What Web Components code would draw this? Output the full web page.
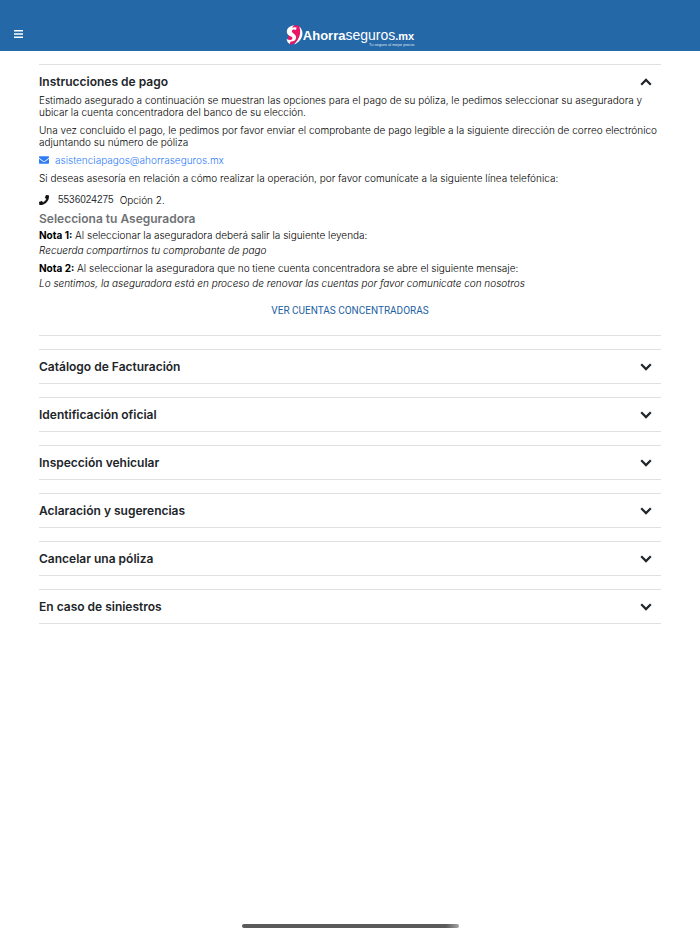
<!DOCTYPE html>
<html lang="es">
<head>
<meta charset="utf-8">
<meta name="viewport" content="width=device-width, initial-scale=1">
<title>Ahorraseguros.mx</title>
<style>
  body { margin: 0; font-family: Inter, "Liberation Sans", sans-serif; font-size: 10px; font-weight: 300; line-height: 12px; color: #000; background: #fff; }
</style>
</head>
<body>
<app-page></app-page>
<script>
const define = (name, html, setup) => customElements.define(name, class extends HTMLElement {
  constructor() {
    super();
    const t = document.createElement('template');
    t.innerHTML = html;
    this.attachShadow({ mode: 'open' }).append(t.content.cloneNode(true));
  }
  connectedCallback() { if (setup) setup(this, this.shadowRoot); }
});

define('brand-logo', `
  <style>
    :host { display: block; color: #fff; }
    a { display: flex; color: inherit; text-decoration: none; font-family: "Liberation Sans", Arial, sans-serif; font-weight: 400; }
    svg { width: 17px; height: 20px; flex: none; }
    .words { display: grid; align-content: start; }
    .name { font-size: 14px; line-height: 12px; white-space: nowrap; padding-top: 4px; }
    b { font-size: 13px; }
    .tld { font-size: 11px; }
    small { font-size: 4px; line-height: 4px; justify-self: end; margin-top: 1px; opacity: .85; }
  </style>
  <a href="#" aria-label="Ahorraseguros.mx">
    <svg viewBox="0 0 17 20" aria-hidden="true">
      <path fill="#e91566" d="M8.600.500c3.600-.8 6.300 1.200 6.200 5.200-.1 5.700-3.700 12.200-9.200 14-2.200-.2-3.500-2-3.700-4.500L3 7C3.500 3.500 5.500 1.200 8.600.500Z"/>
      <path fill="#fff" d="M8.200.500C4.200.500 1 3 .8 6.400c-.1 2.800 1.900 4 4.200 5.200 1.500.8 1.800 1.600 1.200 2.500-1 1.500-3.600 1-5.600-.2.200 2.300 1.300 4 3.100 5 .2-1 .5-1.800 1-2.500 3 .2 5.300-1.500 5.400-4 .2-3.300-4.200-4-4.200-6.200 0-1.700 2-2.200 4-1.200l.8-2.300c-1.700-.7-3.300-.6-4.700 0C6.400 1.700 7.200 1 8.200.500Z"/>
      <path fill="#fff" d="M13.300 1.400c5.400 4.600 4 14.600-5.500 18.100 5-4.500 7.900-10.900 5.500-18.100Z"/>
    </svg>
    <span class="words"><span class="name"><b>Ahorra</b>seguros<b class="tld">.mx</b></span><small>Tu seguro al mejor precio</small></span>
  </a>`);

define('app-header', `
  <style>
    :host { display: grid; grid-template-columns: 1fr auto 1fr; align-items: start; box-sizing: border-box; padding: 25px 14px 4px; min-height: 51px; background: #2468a7; }
    button { justify-self: start; margin: 5px 0 0; padding: 0; border: 0; background: none; color: #fff; display: flex; cursor: pointer; }
    svg { width: 9px; height: 8px; }
  </style>
  <button aria-label="Menú"><svg viewBox="0 0 9 8" fill="currentColor"><path d="M0 0h9v1.500H0zM0 3.200h9v1.500H0zM0 6.500h9V8H0z"/></svg></button>
  <brand-logo></brand-logo>`);

define('accordion-item', `
  <style>
    :host { display: block; border: solid #dfe0e1; border-width: 1px 0; }
    h2 { margin: 0; font-size: 12px; line-height: 16px; font-weight: 600; }
    button { display: flex; width: 100%; justify-content: space-between; align-items: center; padding: 9px 9px 8px 0; border: 0; background: none; font: inherit; color: #212529; text-align: left; cursor: pointer; }
    svg { width: 12px; height: 8px; flex: none; }
    button[aria-expanded="true"] { padding-bottom: 4px; }
    button[aria-expanded="true"] svg { transform: rotate(180deg); }
    [hidden] { display: none; }
  </style>
  <h2><button aria-controls="panel"><slot name="title"></slot><svg viewBox="0 0 12 8" fill="none" stroke="currentColor" stroke-width="2.200" aria-hidden="true"><path d="M1.200 1.300 6 6.100l4.800-4.800"/></svg></button></h2>
  <div id="panel"><slot></slot></div>`,
  (host, root) => {
    const button = root.querySelector('button'), panel = root.querySelector('#panel');
    const sync = () => { const open = host.hasAttribute('open'); button.setAttribute('aria-expanded', open); panel.hidden = !open; };
    button.onclick = () => { host.toggleAttribute('open'); sync(); };
    sync();
  });

define('payment-info', `
  <style>
    :host { display: block; padding-bottom: 14px; }
    p { margin: 0 0 6px; }
    a { text-decoration: none; }
    .row { display: flex; align-items: center; }
    .mail { color: #2f7df6; gap: 6px; }
    .phone { margin: 10px 0 5px; gap: 6px; }
    .number { padding-left: 3px; font-family: "Liberation Sans", Arial, sans-serif; font-weight: 400; color: #2b2f33; }
    svg { width: 10px; height: 10px; flex: none; }
    .phone svg { color: #111; }
    h3 { margin: 0 0 1px; color: #6f7275; font-size: 12px; line-height: 16px; font-weight: 600; }
    .note { line-height: 15px; margin-bottom: 3px; }
    .note strong { color: #000; font-weight: 700; }
    em { display: block; }
    .cta { display: flex; justify-content: center; padding-top: 7px; }
    button { border: 0; background: none; padding: 4px; font: 400 10px/12px Roboto, "Liberation Sans", sans-serif; color: #1d5fa3; cursor: pointer; }
  </style>
  <p>Estimado asegurado a continuación se muestran las opciones para el pago de su póliza, le pedimos seleccionar su aseguradora y ubicar la cuenta concentradora del banco de su elección.</p>
  <p>Una vez concluido el pago, le pedimos por favor enviar el comprobante de pago legible a la siguiente dirección de correo electrónico adjuntando su número de póliza</p>
  <p><a class="row mail" href="mailto:asistenciapagos@ahorraseguros.mx"><svg viewBox="0 0 10 10" fill="currentColor" aria-hidden="true"><path d="M1 1.200h8c.6 0 1 .4 1 1v.5L5.700 5.900c-.5.300-.9.300-1.400 0L0 2.700v-.5c0-.6.4-1 1-1ZM0 3.800l3.700 2.700c.9.600 1.700.6 2.600 0L10 3.800v4c0 .6-.4 1-1 1H1c-.6 0-1-.4-1-1Z"/></svg>asistenciapagos@ahorraseguros.mx</a></p>
  <p>Si deseas asesoría en relación a cómo realizar la operación, por favor comunícate a la siguiente línea telefónica:</p>
  <p class="row phone"><svg viewBox="0 0 512 512" fill="currentColor" stroke="currentColor" stroke-width="16" aria-hidden="true"><path d="M493 25 389 1c-11-3-23 3-27 14l-48 112c-4 10-1 21 7 28l60 49c-36 76-98 139-177 177l-49-60c-7-8-18-11-28-7L15 362C4 366-2 378 1 389l24 104c3 11 12 19 23 19 256 0 464-207 464-464 0-11-8-21-19-23Z"/></svg><span class="number">5536024275</span> <span>Opción 2.</span></p>
  <h3>Selecciona tu Aseguradora</h3>
  <p class="note"><strong>Nota 1:</strong> Al seleccionar la aseguradora deberá salir la siguiente leyenda:<em>Recuerda compartirnos tu comprobante de pago</em></p>
  <p class="note"><strong>Nota 2:</strong> Al seleccionar la aseguradora que no tiene cuenta concentradora se abre el siguiente mensaje:<em>Lo sentimos, la aseguradora está en proceso de renovar las cuentas por favor comunicate con nosotros</em></p>
  <div class="cta"><button>VER CUENTAS CONCENTRADORAS</button></div>`);

define('home-indicator', `
  <style>
    :host { display: block; width: 31%; height: 4px; margin: auto auto 6px; border-radius: 2px; background: linear-gradient(90deg, #5b5b5b 94%, #a5a5a5); }
  </style>`);

define('app-page', `
  <style>
    :host { display: flex; flex-direction: column; min-height: 100vh; }
    main { display: grid; gap: 13px; padding: 13px 39px 24px; }
  </style>
  <app-header></app-header>
  <main>
    <accordion-item open><span slot="title">Instrucciones de pago</span><payment-info></payment-info></accordion-item>
    <accordion-item><span slot="title">Catálogo de Facturación</span></accordion-item>
    <accordion-item><span slot="title">Identificación oficial</span></accordion-item>
    <accordion-item><span slot="title">Inspección vehicular</span></accordion-item>
    <accordion-item><span slot="title">Aclaración y sugerencias</span></accordion-item>
    <accordion-item><span slot="title">Cancelar una póliza</span></accordion-item>
    <accordion-item><span slot="title">En caso de siniestros</span></accordion-item>
  </main>
  <home-indicator></home-indicator>`);
</script>
</body>
</html>
